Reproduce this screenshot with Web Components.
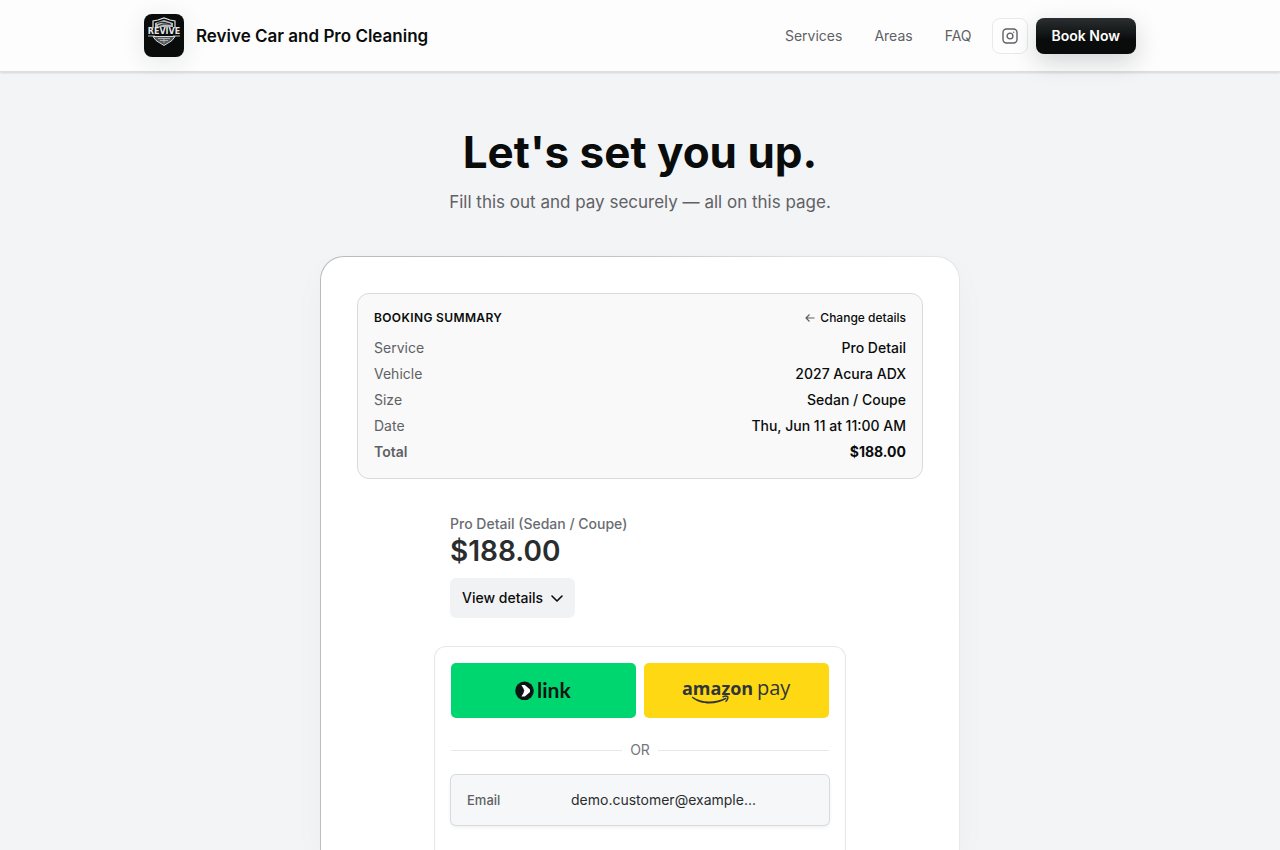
<!DOCTYPE html>
<html lang="en">
<head>
<meta charset="utf-8">
<meta name="viewport" content="width=device-width, initial-scale=1">
<title>Book | Revive Car and Pro Cleaning</title>
<style>
  * { box-sizing: border-box; }

  body {
    margin: 0;
    min-height: 100vh;
    display: flex;
    flex-direction: column;
    background: #f3f4f6;
    color: #0a0c0c;
    font-family: Inter, "Liberation Sans", sans-serif;
    font-size: 14px;
    line-height: 20px;
    --ink: #0a0c0c;
    --muted: #5f6165;
    --line: #d9dadc;
  }

  main {
    flex: 1;
    display: flex;
    flex-direction: column;
    width: 100%;
    max-width: 672px;
    margin: 0 auto;
    padding: 56px 16px 0;
  }
</style>
</head>
<body>
  <site-header>
    <a slot="nav" href="#services">Services</a>
    <a slot="nav" href="#areas">Areas</a>
    <a slot="nav" href="#faq">FAQ</a>
  </site-header>

  <main>
    <page-intro>
      Let's set you up.
      <span slot="lead">Fill this out and pay securely — all on this page.</span>
    </page-intro>

    <booking-card>
      <booking-summary>
        <summary-row label="Service">Pro Detail</summary-row>
        <summary-row label="Vehicle">2027 Acura ADX</summary-row>
        <summary-row label="Size">Sedan / Coupe</summary-row>
        <summary-row label="Date">Thu, Jun 11 at 11:00 AM</summary-row>
        <summary-row label="Total" total>$188.00</summary-row>
      </booking-summary>

      <checkout-panel>
        <order-price slot="price" name="Pro Detail (Sedan / Coupe)">$188.00</order-price>
        <wallet-buttons></wallet-buttons>
        <or-divider>OR</or-divider>
        <email-field value="demo.customer@example..."></email-field>
      </checkout-panel>
    </booking-card>
  </main>

<script>
  // Shared base: attaches an open root and fills it from render()
  class BaseElement extends HTMLElement {
    connectedCallback() {
      if (this.shadowRoot) return;
      this.attachShadow({ mode: 'open' });
      this.shadowRoot.innerHTML = `<style>*{box-sizing:border-box}</style>${this.render()}`;
    }
  }

  class SiteHeader extends BaseElement {
    render() {
      return `
        <style>
          :host {
            display: block;
            position: relative;
            background: #fdfdfd;
            border-bottom: 1px solid #dcdddf;
            box-shadow: 0 1px 2px rgba(0, 0, 0, 0.12);
          }
          .bar {
            display: flex;
            align-items: center;
            justify-content: space-between;
            max-width: 1024px;
            margin: 0 auto;
            padding: 14px 16px;
          }
          .brand {
            display: flex;
            align-items: center;
            gap: 12px;
            color: var(--ink);
            font-size: 17px;
            font-weight: 600;
            line-height: 28px;
            text-decoration: none;
          }
          .logo {
            display: block;
            width: 40px;
            height: 43px;
            border-radius: 8px;
            background: #0a0c0c;
            box-shadow: 0 4px 24px rgba(30, 40, 60, 0.1);
          }
          .right, nav { display: flex; align-items: center; }
          .right { gap: 8px; }
          nav { gap: 32px; margin-right: 12px; }
          ::slotted(a) {
            color: var(--muted);
            text-decoration: none;
          }
          .social {
            display: flex;
            align-items: center;
            justify-content: center;
            width: 36px;
            height: 36px;
            border: 1px solid #e8e9ea;
            border-radius: 8px;
            background: #fefefe;
            color: var(--muted);
          }
          .book {
            height: 36px;
            padding: 0 16px;
            border: 0;
            border-radius: 8px;
            background: linear-gradient(#2b2f31, #0a0c0c 60%);
            box-shadow: 0 8px 24px rgba(20, 25, 40, 0.18);
            color: #fff;
            font: inherit;
            font-weight: 600;
          }
        </style>
        <header class="bar">
          <a class="brand" href="#home">
            <svg class="logo" viewBox="0 0 40 43" aria-hidden="true" fill="none">
              <path d="M9 14V7l5-1 6-2 6 2 5 1v7" stroke="#dfe1e2" stroke-width="1.2"/>
              <path d="M11 13V9l9-3 9 3v4z" fill="#b4b8ba"/>
              <path d="M13 9.5q4-2 8-1l6 2M14 12l5-2h7" stroke="#202324"/>
              <path d="M4 22h7M29 22h7" stroke="#b5b8ba"/>
              <path d="M9 22.5h22l-3 4-8 5-8-5z" fill="#55595b" stroke="#d5d7d8"/>
              <path d="M14 24.5h12M16 26.5h8M20 24v5" stroke="#bfc2c4" stroke-width=".8"/>
              <text x="20" y="20" text-anchor="middle" fill="#e4e6e7" font-family="DejaVu Sans, sans-serif" font-size="8" font-weight="bold">REVIVE</text>
            </svg>
            <span>Revive Car and Pro Cleaning</span>
          </a>
          <div class="right">
            <nav><slot name="nav"></slot></nav>
            <a class="social" href="#instagram" aria-label="Instagram">
              <svg width="16" height="16" viewBox="0 0 16 16" fill="none" stroke="currentColor" stroke-width="1.4">
                <rect x="1" y="1" width="14" height="14" rx="3.5"/>
                <circle cx="8" cy="8" r="2.9"/>
                <circle cx="11.7" cy="4.3" r=".7" fill="currentColor" stroke="none"/>
              </svg>
            </a>
            <button class="book" type="button">Book Now</button>
          </div>
        </header>`;
    }
  }

  class PageIntro extends BaseElement {
    render() {
      return `
        <style>
          :host { display: block; text-align: center; margin-bottom: 40px; }
          h1 {
            margin: 0 0 12px;
            font-size: 44px;
            font-weight: 700;
            line-height: 48px;
          }
          p {
            margin: 0;
            color: var(--muted);
            font-size: 17px;
            line-height: 28px;
          }
        </style>
        <h1><slot></slot></h1>
        <p><slot name="lead"></slot></p>`;
    }
  }

  class BookingCard extends BaseElement {
    render() {
      return `
        <style>
          :host {
            flex: 1;
            display: flex;
            flex-direction: column;
            gap: 36px;
            padding: 36px 36px 0;
            border: 1px solid transparent;
            border-bottom: 0;
            border-radius: 24px 24px 0 0;
            background:
              linear-gradient(#fff, #fff) padding-box,
              linear-gradient(100deg, #b9babc, #c3c4c6 40%, #dfe0e2 65%, #e8e9eb) border-box;
            box-shadow: 0 12px 32px rgba(20, 30, 50, 0.03);
          }
        </style>
        <slot></slot>`;
    }
  }

  class BookingSummary extends BaseElement {
    render() {
      return `
        <style>
          :host {
            display: block;
            padding: 16px;
            border: 1px solid var(--line);
            border-radius: 12px;
            background: #f9f9f9;
          }
          header {
            display: flex;
            justify-content: space-between;
            align-items: center;
            margin-bottom: 12px;
            font-size: 12px;
            line-height: 16px;
          }
          h2 {
            margin: 0;
            font-size: 12px;
            font-weight: 600;
            letter-spacing: 0.03em;
            text-transform: uppercase;
          }
          a {
            display: flex;
            align-items: center;
            gap: 4px;
            color: var(--ink);
            font-weight: 500;
            text-decoration: none;
          }
          .rows { display: flex; flex-direction: column; gap: 6px; }
        </style>
        <header>
          <h2>Booking summary</h2>
          <a href="#details">
            <svg width="12" height="12" viewBox="0 0 12 12" fill="none" stroke="#5f6165" stroke-width="1.2" aria-hidden="true">
              <path d="M10.5 6H2M5.5 2.5L2 6l3.5 3.5"/>
            </svg>
            Change details
          </a>
        </header>
        <div class="rows"><slot></slot></div>`;
    }
  }

  class SummaryRow extends BaseElement {
    render() {
      return `
        <style>
          :host { display: flex; justify-content: space-between; gap: 16px; }
          .label { color: var(--muted); }
          .value { font-weight: 500; text-align: right; }
          :host([total]) span { font-weight: 600; }
          :host([total]) .value { font-weight: 700; }
        </style>
        <span class="label">${this.getAttribute('label')}</span>
        <span class="value"><slot></slot></span>`;
    }
  }

  class CheckoutPanel extends BaseElement {
    render() {
      return `
        <style>
          :host {
            flex: 1;
            display: flex;
            flex-direction: column;
            gap: 28px;
            width: 100%;
            max-width: 412px;
            margin: 0 auto;
          }
          .price { padding: 0 16px; }
          .methods {
            flex: 1;
            padding: 16px 16px 24px;
            border: 1px solid #e6e7e8;
            border-bottom: 0;
            border-radius: 12px 12px 0 0;
          }
        </style>
        <div class="price"><slot name="price"></slot></div>
        <div class="methods"><slot></slot></div>`;
    }
  }

  class OrderPrice extends BaseElement {
    render() {
      return `
        <style>
          :host { display: block; }
          .name { color: #6a6c70; font-weight: 500; line-height: 18px; }
          .amount {
            margin-bottom: 9px;
            color: #2a2d2f;
            font-size: 28px;
            font-weight: 600;
            line-height: 36px;
          }
          button {
            display: flex;
            align-items: center;
            gap: 8px;
            height: 40px;
            padding: 0 12px;
            border: 0;
            border-radius: 6px;
            background: #f1f2f4;
            color: #0a0c0c;
            font: inherit;
            font-weight: 500;
          }
        </style>
        <div class="name">${this.getAttribute('name')}</div>
        <div class="amount"><slot></slot></div>
        <button type="button">
          View details
          <svg width="12" height="12" viewBox="0 0 12 12" fill="none" stroke="currentColor" stroke-width="1.6" stroke-linecap="round" stroke-linejoin="round" aria-hidden="true">
            <path d="M1 4l5 5 5-5"/>
          </svg>
        </button>`;
    }
  }

  class WalletButtons extends BaseElement {
    render() {
      return `
        <style>
          :host { display: flex; gap: 8px; }
          button {
            flex: 1;
            display: flex;
            align-items: center;
            justify-content: center;
            height: 55px;
            padding: 0;
            border: 0;
            border-radius: 5px;
          }
          .link { background: #00d66f; }
          .amazon { background: #ffd814; }
          svg { display: block; }
        </style>
        <button class="link" type="button" aria-label="Pay with Link">
          <svg width="58" height="28" viewBox="0 0 58 28">
            <circle cx="9.5" cy="13.8" r="9.3" fill="#0d1512"/>
            <path d="M6.4 8h3.4l5.2 4.6v2.4l-5.2 4.600H6.4L9 15.200H6.800v-2.800H9z" fill="#fff"/>
            <path d="M5.500 11.800h2.600l1.300 2-1.300 2H5.500z" fill="#0d1512"/>
            <text x="22" y="21" fill="#0d1512" font-family="Lato, sans-serif" font-size="21" font-weight="700">link</text>
          </svg>
        </button>
        <button class="amazon" type="button" aria-label="Pay with Amazon Pay">
          <svg width="112" height="44" viewBox="0 -6 112 44" fill="#2f3538">
            <text x="1" y="20" font-family="Open Sans, sans-serif" font-size="18" font-weight="700">amazon</text>
            <text x="76" y="20" font-family="Open Sans, sans-serif" font-size="20">pay</text>
            <path d="M11.5 21.5c8 6 22 7 33.500 1l.8 1.300C35 30.500 19 30 10.800 22.500z"/>
            <path d="M41.5 22c2-1 4.500-1 5.300-.3.5 1-.3 3.500-2.300 5" fill="none" stroke="#2f3538" stroke-width="1.4"/>
          </svg>
        </button>`;
    }
  }

  class OrDivider extends BaseElement {
    render() {
      return `
        <style>
          :host {
            display: flex;
            align-items: center;
            gap: 8px;
            margin: 22px 0 15px;
            color: #74767a;
          }
          :host::before, :host::after {
            content: "";
            flex: 1;
            height: 1px;
            background: #e6e7e8;
          }
        </style>
        <slot></slot>`;
    }
  }

  class EmailField extends BaseElement {
    render() {
      return `
        <style>
          :host {
            display: flex;
            align-items: center;
            height: 50px;
            padding: 0 16px;
            border-radius: 5px;
            background: #f6f7f8;
            box-shadow: 0 0 0 1px var(--line), 0 2px 4px rgba(0, 0, 0, 0.08);
          }
          label {
            width: 104px;
            color: #5f6165;
            font-size: 13px;
            font-weight: 500;
          }
          input {
            flex: 1;
            min-width: 0;
            padding: 0;
            border: 0;
            outline: 0;
            background: none;
            color: #2a2d2f;
            font: inherit;
            text-overflow: ellipsis;
          }
        </style>
        <label for="email">Email</label>
        <input id="email" type="email" readonly value="${this.getAttribute('value')}">`;
    }
  }

  customElements.define('site-header', SiteHeader);
  customElements.define('page-intro', PageIntro);
  customElements.define('booking-card', BookingCard);
  customElements.define('booking-summary', BookingSummary);
  customElements.define('summary-row', SummaryRow);
  customElements.define('checkout-panel', CheckoutPanel);
  customElements.define('order-price', OrderPrice);
  customElements.define('wallet-buttons', WalletButtons);
  customElements.define('or-divider', OrDivider);
  customElements.define('email-field', EmailField);
</script>
</body>
</html>
